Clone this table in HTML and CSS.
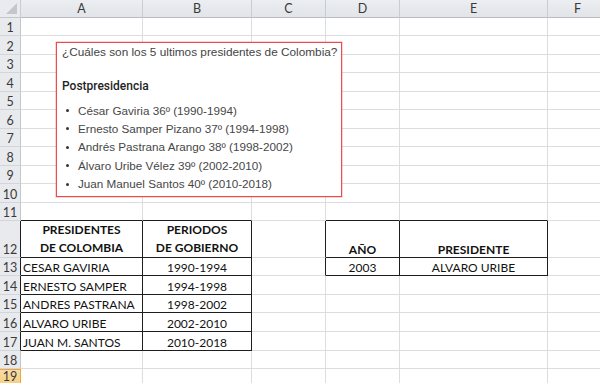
FILE: index.html
```html
<!DOCTYPE html>
<html lang="es">
<head>
<meta charset="utf-8">
<title>Presidentes de Colombia</title>
<link rel="stylesheet" href="styles.css">
</head>
<body>
<div class="sheet">
  <div class="grid">
    <div class="corner"></div><div class="h">A</div><div class="h">B</div><div class="h">C</div><div class="h">D</div><div class="h">E</div><div class="h">F</div>

    <div class="r">1</div><div class="c"></div><div class="c"></div><div class="c"></div><div class="c"></div><div class="c"></div><div class="c"></div>
    <div class="r">2</div><div class="c"></div><div class="c"></div><div class="c"></div><div class="c"></div><div class="c"></div><div class="c"></div>
    <div class="r">3</div><div class="c"></div><div class="c"></div><div class="c"></div><div class="c"></div><div class="c"></div><div class="c"></div>
    <div class="r">4</div><div class="c"></div><div class="c"></div><div class="c"></div><div class="c"></div><div class="c"></div><div class="c"></div>
    <div class="r">5</div><div class="c"></div><div class="c"></div><div class="c"></div><div class="c"></div><div class="c"></div><div class="c"></div>
    <div class="r">6</div><div class="c"></div><div class="c"></div><div class="c"></div><div class="c"></div><div class="c"></div><div class="c"></div>
    <div class="r">7</div><div class="c"></div><div class="c"></div><div class="c"></div><div class="c"></div><div class="c"></div><div class="c"></div>
    <div class="r">8</div><div class="c"></div><div class="c"></div><div class="c"></div><div class="c"></div><div class="c"></div><div class="c"></div>
    <div class="r">9</div><div class="c"></div><div class="c"></div><div class="c"></div><div class="c"></div><div class="c"></div><div class="c"></div>
    <div class="r">10</div><div class="c"></div><div class="c"></div><div class="c"></div><div class="c"></div><div class="c"></div><div class="c"></div>
    <div class="r">11</div><div class="c kb"></div><div class="c kb"></div><div class="c"></div><div class="c kb"></div><div class="c kb"></div><div class="c"></div>

    <div class="r kr">12</div><div class="c t ctr two"><b>PRESIDENTES<br>DE COLOMBIA</b></div><div class="c t ctr two"><b>PERIODOS<br>DE GOBIERNO</b></div><div class="c kr"></div><div class="c t ctr"><b>AÑO</b></div><div class="c t ctr"><b>PRESIDENTE</b></div><div class="c"></div>
    <div class="r kr">13</div><div class="c t">CESAR GAVIRIA</div><div class="c t ctr">1990-1994</div><div class="c kr"></div><div class="c t ctr">2003</div><div class="c t ctr">ALVARO URIBE</div><div class="c"></div>
    <div class="r kr">14</div><div class="c t">ERNESTO SAMPER</div><div class="c t ctr">1994-1998</div><div class="c"></div><div class="c"></div><div class="c"></div><div class="c"></div>
    <div class="r kr">15</div><div class="c t">ANDRES PASTRANA</div><div class="c t ctr">1998-2002</div><div class="c"></div><div class="c"></div><div class="c"></div><div class="c"></div>
    <div class="r kr">16</div><div class="c t">ALVARO URIBE</div><div class="c t ctr">2002-2010</div><div class="c"></div><div class="c"></div><div class="c"></div><div class="c"></div>
    <div class="r kr">17</div><div class="c t">JUAN M. SANTOS</div><div class="c t ctr">2010-2018</div><div class="c"></div><div class="c"></div><div class="c"></div><div class="c"></div>
    <div class="r">18</div><div class="c"></div><div class="c"></div><div class="c"></div><div class="c"></div><div class="c"></div><div class="c"></div>
    <div class="r sel">19</div><div class="c"></div><div class="c"></div><div class="c"></div><div class="c"></div><div class="c"></div><div class="c"></div>
  </div>

  <div class="note">
    <p class="q">¿Cuáles son los 5 ultimos presidentes de Colombia?</p>
    <p class="sub">Postpresidencia</p>
    <ul class="list">
      <li>César Gaviria 36º (1990-1994)</li>
      <li>Ernesto Samper Pizano 37º (1994-1998)</li>
      <li>Andrés Pastrana Arango 38º (1998-2002)</li>
      <li>Álvaro Uribe Vélez 39º (2002-2010)</li>
      <li>Juan Manuel Santos 40º (2010-2018)</li>
    </ul>
  </div>
</div>
</body>
</html>
```

FILE: styles.css
```css
html, body {
  margin: 0;
  padding: 0;
  background: #ffffff;
}

.sheet {
  position: relative;
  width: 600px;
  height: 383px;
  overflow: hidden;
  font-family: Lato, "Liberation Sans", sans-serif;
}

.grid {
  display: grid;
  grid-template-columns: 21px 122px 109px 74px 74px 148px 60px;
  grid-template-rows: 18px 18px 19px 18px 19px 18px 19px 18px 19px 18px 19px 18px 37px 18px 19px 18px 19px 19px 18px 18px;
}

.grid > div {
  box-sizing: border-box;
  border-right: 1px solid #dcdddf;
  border-bottom: 1px solid #dcdddf;
}

.corner {
  position: relative;
  background: #e9ebee;
  border-bottom-color: #c3c6ca !important;
  border-right-color: #c9ccd0 !important;
}
.corner::after {
  content: "";
  position: absolute;
  right: 3px;
  bottom: 3px;
  width: 11px;
  height: 11px;
  background: #c3c7cb;
  clip-path: polygon(100% 0, 100% 100%, 0 100%);
}

.h {
  display: flex;
  align-items: center;
  justify-content: center;
  background: linear-gradient(#eceef1, #e1e4e8);
  border-right-color: #c9ccd0 !important;
  border-bottom-color: #b9bdc2 !important;
  color: #3a3a3a;
  font-size: 12.5px;
}

.r {
  display: flex;
  align-items: flex-end;
  justify-content: center;
  background: #e8eaed;
  border-right-color: #c3c6ca !important;
  border-bottom-color: #d2d5d9 !important;
  color: #3a3a3a;
  font-size: 12.5px;
  line-height: 15px;
}

.r.sel {
  align-items: flex-start;
  background: linear-gradient(#f9dca4, #f5cd80);
  border-top: 1px solid #f1a33a;
  border-right-color: #f1a33a !important;
  line-height: 14px;
}

.c {
  display: flex;
  align-items: flex-end;
  padding: 0 2px;
  color: #121212;
  font-size: 12px;
  line-height: 15px;
  white-space: nowrap;
}

.ctr {
  justify-content: center;
  text-align: center;
}

.two {
  line-height: 18px;
}

.c b {
  font-weight: 700;
}

.t {
  border-right-color: #1e1e1e !important;
  border-bottom-color: #1e1e1e !important;
}

.kb {
  border-bottom-color: #1e1e1e !important;
}

.kr {
  border-right-color: #1e1e1e !important;
}

.note {
  position: absolute;
  left: 56px;
  top: 42px;
  width: 286px;
  height: 155px;
  box-sizing: border-box;
  border: 1px solid #ea4d4d;
  box-shadow: 0 0 0 0.5px rgba(240, 110, 110, 0.6);
  background: #ffffff;
  padding: 1px 0 0 5px;
  font-family: "Liberation Sans", Arial, sans-serif;
}

.q {
  margin: 0;
  font-size: 11.8px;
  line-height: 16px;
  color: #444444;
  white-space: nowrap;
}

.sub {
  margin: 18px 0 0 0;
  font-family: Roboto, "Liberation Sans", sans-serif;
  font-weight: 500;
  font-size: 12px;
  line-height: 16px;
  color: #1f1f1f;
}

.list {
  list-style: none;
  margin: 7px 0 0 0;
  padding: 0;
}

.list li {
  display: flex;
  align-items: center;
  height: 18.4px;
  padding-left: 16px;
  position: relative;
  font-size: 11.7px;
  color: #474747;
  white-space: nowrap;
}

.list li::before {
  content: "";
  position: absolute;
  left: 4px;
  top: 8px;
  width: 3px;
  height: 3px;
  border-radius: 50%;
  background: #333333;
}
```
